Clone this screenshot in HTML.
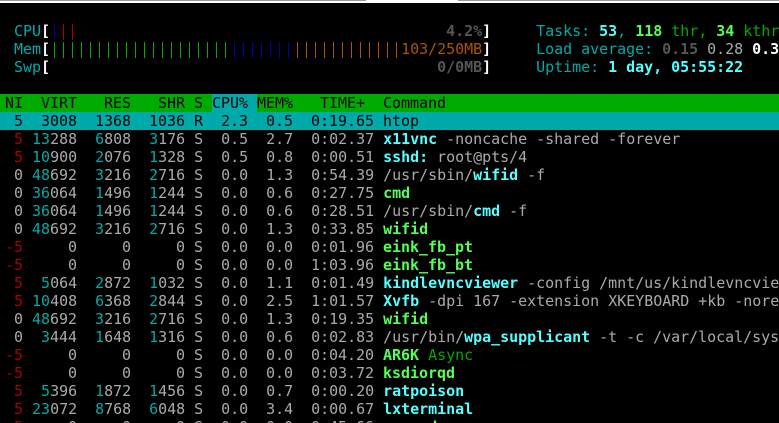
<!DOCTYPE html>
<html><head><meta charset="utf-8"><style>
html,body{margin:0;padding:0;background:#000}
#s{position:relative;width:779px;height:423px;overflow:hidden;background:#000;font:15px/18px "DejaVu Sans Mono",monospace;color:#aaa;letter-spacing:-0.03px}
#t{position:absolute;left:0;top:0;width:779px;height:3px;background:#fff}
.tg{position:absolute;top:0;height:1px;background:#999}
.l{position:absolute;left:5px;width:774px;height:18px;white-space:pre;overflow:hidden;font-variant-ligatures:none}
i{font-style:normal}
.c{color:#00aaaa}.r{color:#aa0000}.g{color:#00aa00}.b{color:#0000aa}.o{color:#aa5500}
.W{color:#fff;font-weight:bold}.D{color:#555;font-weight:bold}
.C{color:#55ffff;font-weight:bold}.G{color:#55ff55;font-weight:bold}
.hd{background:#00aa00;color:#000;left:0;padding-left:5px;width:774px}
.sel{background:#00aaaa;color:#000;left:0;padding-left:5px;width:774px}
.hl{background:#00aaaa}
.bar{position:absolute;height:16px}
</style></head><body><div id="s">
<div id="t"></div><div class="tg" style="left:0;width:366px"></div><div class="tg" style="left:458px;width:321px"></div>
<div class="bar" style="left:54px;top:24px;width:9px;background:repeating-linear-gradient(90deg,#0000aa 0 1px,transparent 1px 9px)"></div>
<div class="bar" style="left:63px;top:24px;width:18px;background:repeating-linear-gradient(90deg,#aa0000 0 1px,transparent 1px 9px)"></div>
<div class="bar" style="left:54px;top:42px;width:180px;background:repeating-linear-gradient(90deg,#00aa00 0 1px,transparent 1px 9px)"></div>
<div class="bar" style="left:234px;top:42px;width:63px;background:repeating-linear-gradient(90deg,#0000aa 0 1px,transparent 1px 9px)"></div>
<div class="bar" style="left:297px;top:42px;width:108px;background:repeating-linear-gradient(90deg,#aa5500 0 1px,transparent 1px 9px)"></div>
<div class="l" style="top:22px"> <i class="c">CPU</i><i class="W">[</i>                                            <i class="D">4.2%</i><i class="W">]</i>     <i class="c">Tasks: </i><i class="C">53</i><i class="c">, </i><i class="G">118</i><i class="g"> thr, </i><i class="G">34</i><i class="g"> kthr</i></div>
<div class="l" style="top:40px"> <i class="c">Mem</i><i class="W">[</i>                                       <i class="o">103/250MB</i><i class="W">]</i>     <i class="c">Load average: </i><i class="D">0.15 </i>0.28 <i class="W">0.31</i></div>
<div class="l" style="top:58px"> <i class="c">Swp</i><i class="W">[</i>                                           <i class="D">0/0MB</i><i class="W">]</i>     <i class="c">Uptime: </i><i class="C">1 day, 05:55:22</i></div>
<div class="l hd" style="top:94px">NI  VIRT   RES   SHR S <i class="hl">CPU% </i>MEM%   TIME+  Command</div>
<div class="l sel" style="top:112px"> 5  3008  1368  1036 R  2.3  0.5  0:19.65 htop</div>
<div class="l" style="top:130px"> <i class="r">5</i> <i class="c">13</i>288  <i class="c">6</i>808  <i class="c">3</i>176 S  0.5  2.7  0:02.37 <i class="C">x11vnc</i> -noncache -shared -forever</div>
<div class="l" style="top:148px"> <i class="r">5</i> <i class="c">10</i>900  <i class="c">2</i>076  <i class="c">1</i>328 S  0.5  0.8  0:00.51 <i class="C">sshd:</i> root@pts/4</div>
<div class="l" style="top:166px"> 0 <i class="c">48</i>692  <i class="c">3</i>216  <i class="c">2</i>716 S  0.0  1.3  0:54.39 /usr/sbin/<i class="C">wifid</i> -f</div>
<div class="l" style="top:184px"> 0 <i class="c">36</i>064  <i class="c">1</i>496  <i class="c">1</i>244 S  0.0  0.6  0:27.75 <i class="G">cmd</i></div>
<div class="l" style="top:202px"> 0 <i class="c">36</i>064  <i class="c">1</i>496  <i class="c">1</i>244 S  0.0  0.6  0:28.51 /usr/sbin/<i class="C">cmd</i> -f</div>
<div class="l" style="top:220px"> 0 <i class="c">48</i>692  <i class="c">3</i>216  <i class="c">2</i>716 S  0.0  1.3  0:33.85 <i class="G">wifid</i></div>
<div class="l" style="top:238px"><i class="r">-5</i>     0     0     0 S  0.0  0.0  0:01.96 <i class="G">eink_fb_pt</i></div>
<div class="l" style="top:256px"><i class="r">-5</i>     0     0     0 S  0.0  0.0  1:03.96 <i class="G">eink_fb_bt</i></div>
<div class="l" style="top:274px"> <i class="r">5</i>  <i class="c">5</i>064  <i class="c">2</i>872  <i class="c">1</i>032 S  0.0  1.1  0:01.49 <i class="C">kindlevncviewer</i> -config /mnt/us/kindlevncviewer</div>
<div class="l" style="top:292px"> <i class="r">5</i> <i class="c">10</i>408  <i class="c">6</i>368  <i class="c">2</i>844 S  0.0  2.5  1:01.57 <i class="C">Xvfb</i> -dpi 167 -extension XKEYBOARD +kb -noreset</div>
<div class="l" style="top:310px"> 0 <i class="c">48</i>692  <i class="c">3</i>216  <i class="c">2</i>716 S  0.0  1.3  0:19.35 <i class="G">wifid</i></div>
<div class="l" style="top:328px"> 0  <i class="c">3</i>444  <i class="c">1</i>648  <i class="c">1</i>316 S  0.0  0.6  0:02.83 /usr/bin/<i class="C">wpa_supplicant</i> -t -c /var/local/system</div>
<div class="l" style="top:346px"><i class="r">-5</i>     0     0     0 S  0.0  0.0  0:04.20 <i class="G">AR6K</i><i class="g"> Async</i></div>
<div class="l" style="top:364px"><i class="r">-5</i>     0     0     0 S  0.0  0.0  0:03.72 <i class="G">ksdiorqd</i></div>
<div class="l" style="top:382px"> <i class="r">5</i>  <i class="c">5</i>396  <i class="c">1</i>872  <i class="c">1</i>456 S  0.0  0.7  0:00.20 <i class="C">ratpoison</i></div>
<div class="l" style="top:400px"> <i class="r">5</i> <i class="c">23</i>072  <i class="c">8</i>768  <i class="c">6</i>048 S  0.0  3.4  0:00.67 <i class="C">lxterminal</i></div>
<div class="l" style="top:418px"> <i class="r">5</i>     0     0     0 S  0.0  0.0  0:45.66 <i class="G">powerd</i></div>
</div></body></html>
